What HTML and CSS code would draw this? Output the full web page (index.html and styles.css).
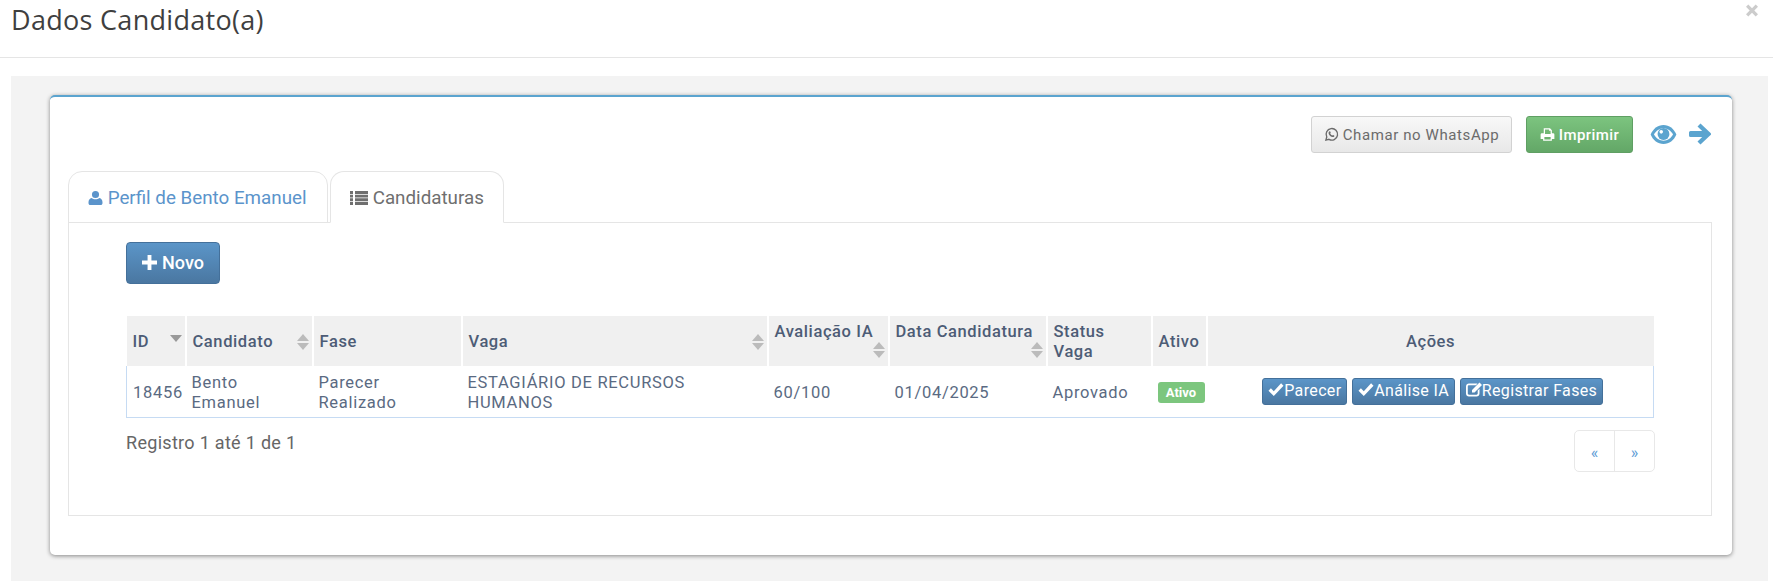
FILE: index.html
```html
<!DOCTYPE html>
<html lang="pt-BR">
<head>
<meta charset="utf-8">
<title>Dados Candidato(a)</title>
<link rel="stylesheet" href="styles.css">
</head>
<body>
<header class="modal-header">
  <h1 class="modal-title">Dados Candidato(a)</h1>
  <svg class="close" viewBox="0 0 12 12" aria-label="Fechar"><path fill="currentColor" d="M2.300 0L6 3.700 9.700 0 12 2.300 8.300 6 12 9.700 9.700 12 6 8.300 2.300 12 0 9.700 3.700 6 0 2.300z"/></svg>
</header>
<main class="modal-body">
  <section class="card">
    <div class="toolbar">
      <button class="btn btn-default"><svg class="ico" viewBox="0 0 24 24"><path fill="none" stroke="currentColor" stroke-width="2.2" d="M3 21l1.4-5A9.2 9.2 0 1 1 8 19.7z"/><path fill="currentColor" d="M8.6 7.2c.5-.5 1.300-.4 1.500.2l.7 1.700-.9 1.300c.7 1.400 1.800 2.500 3.300 3.200l1.200-1 1.800.8c.5.300.6 1 .2 1.600-.9 1.200-2.700 1.300-4.500.4-2-1-3.700-2.700-4.400-4.700-.4-1.300-.1-2.600 1-3.500z"/></svg> Chamar no WhatsApp</button>
      <button class="btn btn-success"><svg class="ico" viewBox="0 0 24 24"><path fill="currentColor" d="M6 2h10l3 3v5h2a2 2 0 0 1 2 2v7h-4v3H5v-3H1v-7a2 2 0 0 1 2-2h3zm2 2v7h9V6h-2.500V4zM7 16v4h10v-4z"/></svg> Imprimir</button>
      <svg class="tool-eye" viewBox="0 0 28 22"><path fill="currentColor" d="M14 1C8 1 3 5 .5 11 3 17 8 21 14 21s11-4 13.500-10C25 5 20 1 14 1z"/><path fill="#fff" d="M14 4.500c-4 0-7.800 2.500-10 6.500 2.200 4 6 6.500 10 6.500s7.800-2.500 10-6.500c-2.200-4-6-6.500-10-6.500z"/><circle cx="14" cy="10.500" r="6.200" fill="currentColor"/><circle cx="11.600" cy="8.200" r="1.900" fill="#fff"/></svg>
      <svg class="tool-arrow" viewBox="0 0 22 22"><path fill="currentColor" d="M11.500 .5l9.800 9.200a1.700 1.700 0 0 1 0 2.600l-9.800 9.200-3-3 4.700-4.500H1.500A1.500 1.500 0 0 1 0 12.500v-3A1.500 1.500 0 0 1 1.500 8h11.700L8.500 3.500z"/></svg>
    </div>
    <nav class="tabs">
      <a class="tab tab-link"><svg class="tab-ico tab-ico-user" viewBox="0 0 16 16"><path fill="currentColor" d="M8 .5a3.800 3.800 0 1 1 0 7.600A3.800 3.800 0 0 1 8 .5zM3.800 8c1.100.9 2.600 1.400 4.200 1.400s3.100-.5 4.200-1.400c1.900.3 3.300 2 3.300 5 0 1.600-.8 2.500-2.200 2.500H2.700C1.300 15.500.5 14.600.5 13c0-3 1.400-4.700 3.300-5z"/></svg> Perfil de Bento Emanuel</a>
      <a class="tab tab-active"><svg class="tab-ico tab-ico-list" viewBox="0 0 18 16"><path fill="currentColor" d="M0 1h3v3H0zM5 1h13v3H5zM0 4.800h3v2.700H0zM5 4.800h13v2.700H5zM0 8.300h3v2.700H0zM5 8.300h13v2.700H5zM0 11.800h3V15H0zM5 11.800h13V15H5z"/></svg> Candidaturas</a>
    </nav>
    <div class="pane">
      <button class="btn btn-primary btn-new"><svg class="plus" viewBox="0 0 14 14"><path fill="currentColor" d="M5.200 0h3.600v5.200H14v3.600H8.800V14H5.200V8.800H0V5.200h5.200z"/></svg> Novo</button>
      <table class="grid">
        <colgroup>
          <col class="c-id"><col class="c-cand"><col class="c-fase"><col class="c-vaga"><col class="c-aval"><col class="c-data"><col class="c-status"><col class="c-ativo"><col class="c-acoes">
        </colgroup>
        <thead>
          <tr>
            <th>ID<span class="sort only-down"></span></th>
            <th>Candidato<span class="sort"></span></th>
            <th>Fase</th>
            <th>Vaga<span class="sort"></span></th>
            <th class="th-top">Avaliação IA<span class="sort sort-low"></span></th>
            <th class="th-top">Data Candidatura<span class="sort sort-low"></span></th>
            <th>Status Vaga</th>
            <th>Ativo</th>
            <th class="center">Ações</th>
          </tr>
        </thead>
        <tbody>
          <tr>
            <td>18456</td>
            <td>Bento Emanuel</td>
            <td>Parecer Realizado</td>
            <td>ESTAGIÁRIO DE RECURSOS HUMANOS</td>
            <td>60/100</td>
            <td>01/04/2025</td>
            <td>Aprovado</td>
            <td><span class="badge">Ativo</span></td>
            <td class="center actions">
              <button class="btn btn-primary btn-xs"><svg class="chk" viewBox="0 0 16 14"><path fill="currentColor" d="M5.800 13.500L.5 8.200l2.400-2.400 2.900 2.900L13.100.8l2.400 2.400z"/></svg>Parecer</button>
              <button class="btn btn-primary btn-xs"><svg class="chk" viewBox="0 0 16 14"><path fill="currentColor" d="M5.800 13.500L.5 8.200l2.400-2.400 2.900 2.900L13.100.8l2.400 2.400z"/></svg>Análise IA</button>
              <button class="btn btn-primary btn-xs"><svg class="chk" viewBox="0 0 16 14"><path fill="currentColor" d="M3 1h8.500L10 2.800H3c-.7 0-1.200.5-1.200 1.200v7c0 .7.500 1.200 1.200 1.200h7.500c.7 0 1.200-.5 1.200-1.200V8l1.800-1.800V11c0 1.700-1.300 3-3 3H3c-1.700 0-3-1.300-3-3V4c0-1.700 1.300-3 3-3zM13.500 0L16 2.500 8.500 10H6V7.500z"/></svg>Registrar Fases</button>
            </td>
          </tr>
        </tbody>
      </table>
      <div class="table-foot">
        <span class="info">Registro 1 até 1 de 1</span>
        <div class="pager"><a class="page">«</a><a class="page">»</a></div>
      </div>
    </div>
  </section>
</main>
</body>
</html>
```
FILE: styles.css
```css
* { box-sizing: border-box; }
html, body { margin: 0; height: 581px; overflow: hidden; background: #fff; }
body { font-family: Roboto, "Liberation Sans", sans-serif; color: #5a6a82; display: flex; flex-direction: column; }

.modal-header { height: 58px; border-bottom: 1px solid #e5e5e5; padding: 3px 15px 0 11px; display: flex; justify-content: space-between; align-items: flex-start; }
.modal-title { margin: 0; font: 500 27px/34px "Open Sans", sans-serif; color: #3f3f3f; letter-spacing: .3px; }
.close { width: 12px; height: 13px; margin-top: 1px; color: #ccc; }

.modal-body { flex: 1; background: #f3f3f3; margin: 18px 5px 0 11px; padding: 19px 36px 0 39px; }

.card { height: 460px; background: #fff; border-top: 2px solid #5ba4cf; border-radius: 5px; box-shadow: 0 1px 4px rgba(0,0,0,.45); padding: 19px 20px 0 18px; }

.toolbar { display: flex; justify-content: flex-end; align-items: center; height: 37px; }
.btn { font-family: Roboto, sans-serif; border-radius: 3px; border: 1px solid; cursor: pointer; display: inline-flex; align-items: center; justify-content: center; }
.btn-default { width: 201px; height: 37px; font-size: 15px; letter-spacing: .6px; color: #6b6b6b; border-color: #d2d2d2; background: linear-gradient(#f8f8f8, #e8e8e8); }
.btn-success { width: 107px; height: 37px; margin-left: 14px; font-size: 15px; font-weight: 500; letter-spacing: .4px; color: #fff; border-color: #5f9f63; background: linear-gradient(#7cc47f, #63a767); }
.ico { width: 15px; height: 15px; margin-right: 4px; }
.tool-eye { width: 27px; height: 21px; margin-left: 17px; color: #5ba4cf; }
.tool-arrow { width: 22px; height: 22px; margin: 0 1px 1px 12px; color: #5ba4cf; }

.tabs { display: flex; gap: 2px; margin-top: 18px; position: relative; z-index: 1; }
.tab { height: 52px; margin-bottom: -1px; padding: 2px 0 0 19px; display: flex; align-items: center; white-space: pre; font-size: 18.8px; border: 1px solid #e5e5e5; border-radius: 14px 14px 0 0; }
.tab-link { color: #5b94cb; width: 260px; border-bottom-color: #e5e5e5; }
.tab-active { color: #6f6f6f; width: 174px; background: #fff; border-bottom-color: #fff; }
.tab-ico { height: 16px; }
.tab-ico-user { width: 15px; }
.tab-ico-list { width: 18px; }

.pane { height: 294px; border: 1px solid #e5e5e5; padding: 19px 49px 0 57px; }
.btn-primary { color: #fff; border-color: #44709a; background: linear-gradient(#5b95c8, #4a77a1); }
.btn-new { width: 94px; height: 42px; padding-bottom: 2px; font-size: 18px; font-weight: 500; border-radius: 4px; }
.plus { width: 15px; height: 15px; margin-right: 5px; }

.grid { margin-top: 32px; width: 1527px; table-layout: fixed; border-collapse: collapse; font-size: 16.5px; line-height: 20px; letter-spacing: .7px; }
.c-id { width: 59px; } .c-cand { width: 127px; } .c-fase { width: 149px; } .c-vaga { width: 306px; }
.c-aval { width: 121px; } .c-data { width: 158px; } .c-status { width: 105px; } .c-ativo { width: 55px; } .c-acoes { width: 447px; }
.grid th { position: relative; height: 50px; padding: 2px 6px 0; background: #f0f0f0; border-right: 2px solid #fff; text-align: left; font-weight: 500; letter-spacing: .6px; color: #4d5c76; vertical-align: middle; }
.grid th:last-child { border-right: 0; }
.grid th.th-top { vertical-align: top; padding-top: 6px; }
.grid td { height: 51px; padding: 3px 6px 0; vertical-align: middle; border-bottom: 1px solid #c6dbf3; color: #5a6a82; }
.grid td:first-child { border-left: 1px solid #c6dbf3; padding-right: 2px; }
.grid td:last-child { border-right: 1px solid #c6dbf3; padding: 0 4px 0 10px; }
.grid .center { text-align: center; }

.sort { position: absolute; right: 3px; top: 18px; width: 12px; height: 16px; }
.sort::before, .sort::after { content: ""; position: absolute; left: 0; border-left: 6px solid transparent; border-right: 6px solid transparent; }
.sort::before { top: 0; border-bottom: 7px solid #bbb; }
.sort::after { bottom: 0; border-top: 7px solid #bbb; }
.sort-low { top: 26px; }
.only-down::before { display: none; }
.only-down::after { bottom: auto; top: 1px; border-top-color: #999; }

.badge { display: inline-block; width: 47px; height: 21px; line-height: 21px; border-radius: 3px; background: #7cc67e; color: #fff; font-size: 13px; font-weight: 700; text-align: center; letter-spacing: 0; vertical-align: middle; }
.actions { font-size: 0; }
.btn-xs { height: 27px; margin-right: 4px; padding: 0 5px; font-size: 16px; letter-spacing: .35px; line-height: 1; vertical-align: middle; }
.btn-xs:last-child { margin-right: 0; }
.chk { width: 16px; height: 15px; margin-bottom: 3px; }

.table-foot { display: flex; justify-content: space-between; align-items: flex-start; width: 1529px; margin-top: 12px; }
.info { font-size: 18px; line-height: 26px; color: #666; letter-spacing: .3px; }
.pager { display: flex; width: 81px; height: 42px; border: 1px solid #e8e8e8; border-radius: 5px; }
.page { flex: 1; display: flex; align-items: center; justify-content: center; color: #5b9bd5; font-size: 16px; padding-top: 3px; }
.page + .page { border-left: 1px solid #e8e8e8; }
```
